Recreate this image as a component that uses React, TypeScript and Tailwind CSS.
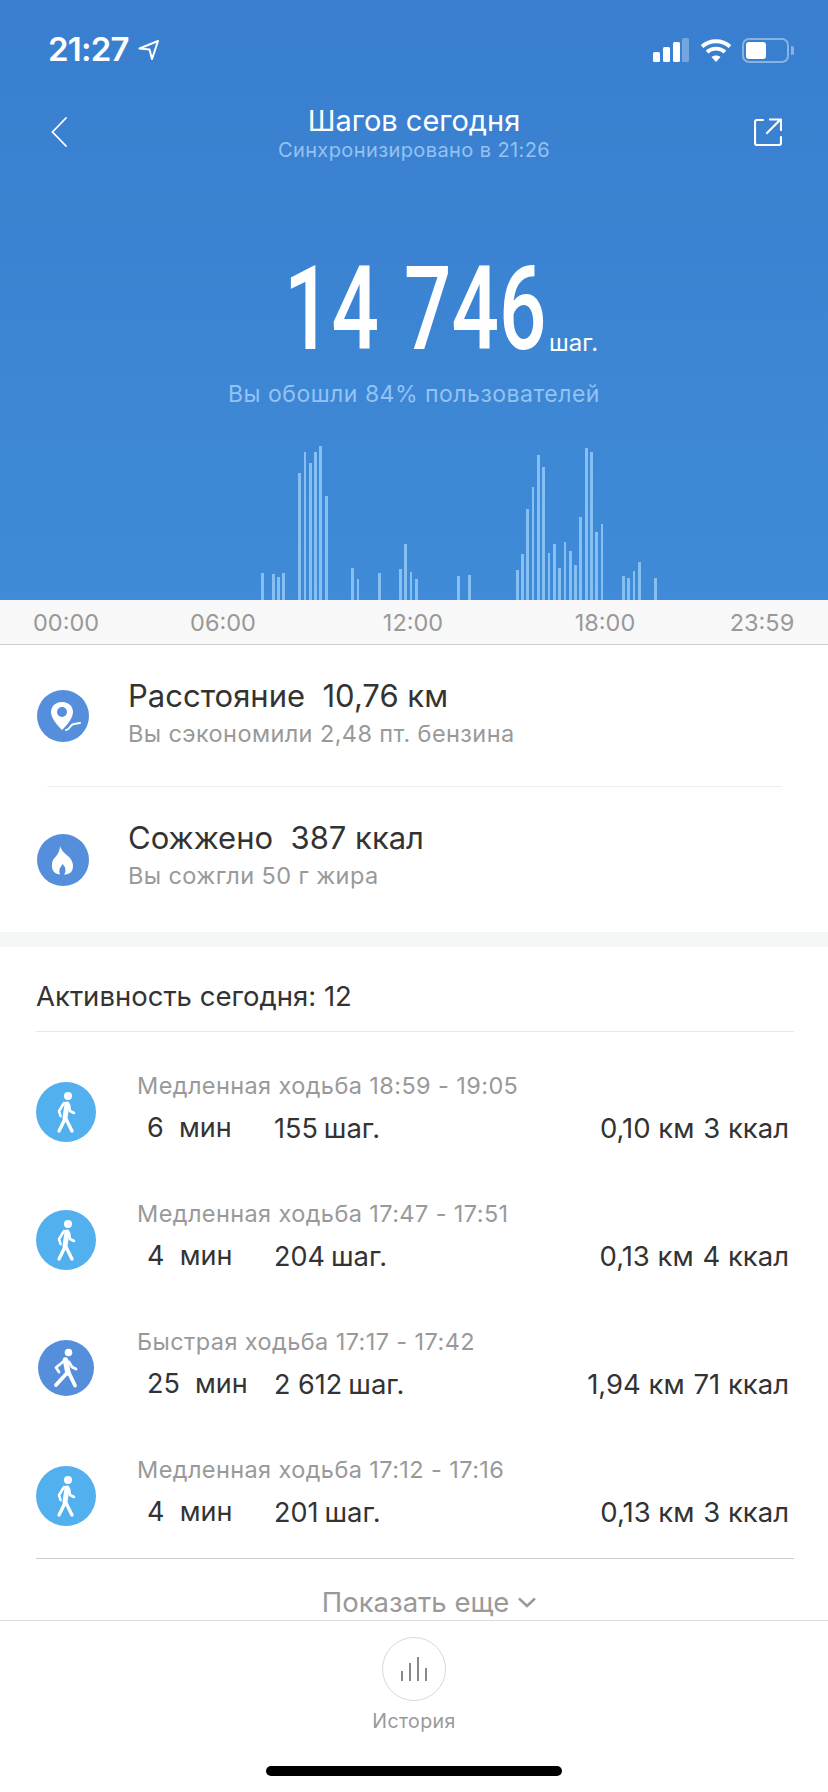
const bars = [
  [261, 3, 27], [272, 3, 26], [277, 3, 23], [282, 3, 27], [298, 3, 127], [304, 2, 148], [309, 3, 137], [314, 3, 148],
  [319, 3, 154], [325, 3, 104], [351, 3, 32], [357, 2, 21], [378, 3, 27], [399, 3, 31], [404, 3, 56], [410, 2, 28],
  [415, 3, 21], [457, 3, 24], [468, 3, 25], [516, 3, 30], [521, 3, 46], [526, 3, 91], [532, 2, 113], [537, 3, 145],
  [542, 3, 133], [548, 2, 47], [553, 3, 56], [558, 3, 32], [564, 2, 58], [569, 3, 49], [574, 3, 35], [579, 3, 83],
  [585, 3, 152], [590, 3, 148], [595, 3, 68], [601, 2, 76], [622, 3, 24], [627, 3, 22], [633, 2, 29], [638, 3, 38],
  [654, 3, 22],
];

const activities = [
  { title: "Медленная ходьба 18:59 - 19:05", min: "6", steps: "155", km: "0,10", kcal: "3", fast: false },
  { title: "Медленная ходьба 17:47 - 17:51", min: "4", steps: "204", km: "0,13", kcal: "4", fast: false },
  { title: "Быстрая ходьба 17:17 - 17:42", min: "25", steps: "2 612", km: "1,94", kcal: "71", fast: true },
  { title: "Медленная ходьба 17:12 - 17:16", min: "4", steps: "201", km: "0,13", kcal: "3", fast: false },
];

function StatusBar() {
  return (
    <div className="h-[90px] pt-[31px] pl-[48px] pr-[34px] flex justify-between items-start text-white">
      <div className="flex items-center h-[38px]">
        <span className="text-[33px] font-semibold tracking-[-0.8px]">21:27</span>
        <svg width="22" height="22" viewBox="0 0 22 22" className="ml-[9px]" fill="none" stroke="white" strokeWidth="2">
          <path d="M1.500 9.500 L20 2 L14 20 L11.500 10.500 Z" strokeLinejoin="round" />
        </svg>
      </div>
      <div className="flex items-center h-[38px]">
        <svg width="36" height="24" viewBox="0 0 36 24">
          <rect x="0" y="14" width="7" height="10" rx="1.500" fill="white" />
          <rect x="10" y="9" width="7" height="15" rx="1.500" fill="white" />
          <rect x="20" y="4" width="7" height="20" rx="1.500" fill="white" />
          <rect x="29" y="0" width="7" height="24" rx="1.500" fill="white" fillOpacity="0.3" />
        </svg>
        <svg width="32" height="24" viewBox="0 0 32 24" fill="none" stroke="white" strokeWidth="3.800" className="ml-[11px]">
          <path d="M2 8.500 C10 1.500 22 1.500 30 8.500" />
          <path d="M7 14 C12 9.500 20 9.500 25 14" />
          <path d="M16 24 L11.500 19 C14 17 18 17 20.500 19 Z" fill="white" stroke="none" />
        </svg>
        <div className="relative w-[47px] h-[25px] ml-[10px] rounded-[7px] border-2 border-white/40 p-[2px] mr-[5px]">
          <div className="w-[20px] h-full rounded-[3px] bg-white"></div>
          <div className="absolute right-[-7px] top-[6px] w-[3px] h-[9px] rounded-r-[2px] bg-white/40"></div>
        </div>
      </div>
    </div>
  );
}

function NavBar() {
  return (
    <div className="h-[72px] flex justify-between items-start pl-[51px] pr-[46px]">
      <svg width="16" height="30" viewBox="0 0 16 30" fill="none" stroke="white" strokeWidth="1.800" className="mt-[27px]" strokeLinecap="round">
        <path d="M15 1 L1.500 15 L15 29" />
      </svg>
      <div className="flex flex-col items-center pt-[14px] ml-[7px]">
        <span className="text-[29px] leading-[34px] text-white">Шагов сегодня</span>
        <span className="text-[20px] leading-[22px] mt-[1px] tracking-[0.4px] text-[#95c2f0]">Синхронизировано в 21:26</span>
      </div>
      <svg width="28" height="28" viewBox="0 0 28 28" fill="none" stroke="white" strokeWidth="2.200" className="mt-[28px]" strokeLinecap="round" strokeLinejoin="round">
        <path d="M9 2 H3 Q1 2 1 4 V25 Q1 27 3 27 H25 Q27 27 27 25 V19" />
        <path d="M13 15 L26 2 M16 1.500 H27 V12" />
      </svg>
    </div>
  );
}

function PinIcon() {
  return (
    <svg width="52" height="52" viewBox="0 0 52 52" className="shrink-0">
      <circle cx="26" cy="26" r="26" fill="#558edb" />
      <path d="M25 12 C17.500 12 14 17.500 14 22 C14 28 20 35 25 40 C30 35 36 28 36 22 C36 17.500 32.500 12 25 12 Z" fill="white" />
      <circle cx="25" cy="22" r="5" fill="#558edb" />
      <path d="M29 40 C33 40 33 34 37 34 L43 33" fill="none" stroke="white" strokeWidth="2" strokeLinecap="round" />
    </svg>
  );
}

function FlameIcon() {
  return (
    <svg width="52" height="52" viewBox="0 0 52 52" className="shrink-0">
      <circle cx="26" cy="26" r="26" fill="#558edb" />
      <path d="M23 12 C25 18 29 20 33 24 C37 29 37 36 33 39 C31 40.500 29 40.500 27 40.500 C30 37 28 32 25.500 30 C24 33 21 35 23 40.500 C19 40.500 14 37 15 30 C15.500 25 18 24 20 21 C22 18 23 15 23 12 Z" fill="white" />
    </svg>
  );
}

function WalkIcon({ fast }: { fast: boolean }) {
  if (fast) {
    return (
      <svg width="56" height="56" viewBox="0 0 56 56">
        <circle cx="28" cy="28" r="28" fill="#558edb" />
        <circle cx="30.500" cy="12.500" r="3.800" fill="white" />
        <path d="M27.500 20 L30 33" stroke="white" strokeWidth="5.500" strokeLinecap="round" />
        <path d="M29 33 L18 45 M31 33 L37 45.500" fill="none" stroke="white" strokeWidth="3.800" strokeLinecap="round" strokeLinejoin="round" />
        <path d="M26 21 L18 27.500 L21 32 M31 22 L34 27 L38 29" fill="none" stroke="white" strokeWidth="2.800" strokeLinecap="round" strokeLinejoin="round" />
      </svg>
    );
  }
  return (
    <svg width="60" height="60" viewBox="0 0 60 60">
      <circle cx="30" cy="30" r="30" fill="#53b0ee" />
      <circle cx="32" cy="14" r="4" fill="white" />
      <path d="M31 22 L29 36" stroke="white" strokeWidth="5" strokeLinecap="round" />
      <path d="M29 37 L23 49 M30 37 L36 49" fill="none" stroke="white" strokeWidth="3.400" strokeLinecap="round" />
      <path d="M28 21 L23 29 L24.500 34 M33 23 L34 29 L38 31" fill="none" stroke="white" strokeWidth="2.600" strokeLinecap="round" strokeLinejoin="round" />
    </svg>
  );
}

function SummaryRow({ icon, title, value, note, rowClass, textClass }: { icon: React.ReactNode; title: string; value: string; note: string; rowClass: string; textClass: string }) {
  return (
    <div className={"flex items-center pl-[37px] " + rowClass}>
      {icon}
      <div className={"ml-[39px] " + textClass}>
        <div className="text-[31px] leading-[38px] text-[#333] whitespace-pre">
          {title}  {value}
        </div>
        <div className="text-[23.500px] leading-[28px] mt-[5px] tracking-[0.4px] text-[#999]">{note}</div>
      </div>
    </div>
  );
}

function ActivityRow({ a }: { a: (typeof activities)[number] }) {
  return (
    <div className="h-[128px] flex items-center">
      <div className="w-[60px] flex justify-center shrink-0">
        <WalkIcon fast={a.fast} />
      </div>
      <div className="flex-1 ml-[41px] mr-[5px] -mt-[7px]">
        <div className="text-[23.500px] leading-[30px] tracking-[0.4px] text-[#999]">{a.title}</div>
        <div className="flex justify-between mt-[10px] text-[27px] leading-[34px] text-[#333]">
          <div className="flex pl-[10px]">
            <span className="w-[127px] whitespace-pre">{a.min}  мин</span>
            <span>
              {a.steps}
              <span className="ml-[6px] text-[27.500px]">шаг.</span>
            </span>
          </div>
          <span className="text-[27.500px]">
            {a.km} км <span className="ml-[1px]">{a.kcal} ккал</span>
          </span>
        </div>
      </div>
    </div>
  );
}

export default function App() {
  return (
    <div className="relative w-[828px] h-[1792px] overflow-hidden bg-white font-[Inter,sans-serif]">
      <div className="h-[600px] bg-linear-to-b from-[#397ecf] to-[#3f8bd7] flex flex-col">
        <StatusBar />
        <NavBar />
        <div className="h-[94px]"></div>
        <div className="flex items-end pl-[289px] h-[106px]">
          <div className="w-[253px] flex justify-center">
            <span className="shrink-0 scale-x-[0.72] text-[116px] leading-[106px] font-medium [word-spacing:6px] whitespace-nowrap text-white font-[Roboto,sans-serif]">
              14 746
            </span>
          </div>
          <span className="text-[24px] leading-[30px] mb-[4px] text-white ml-[7px]">шаг.</span>
        </div>
        <div className="text-center text-[23px] leading-[30px] mt-[17px] tracking-[0.5px] text-[#93c3f2]">Вы обошли 84% пользователей</div>
        <svg width="828" height="160" viewBox="0 0 828 160" className="mt-auto">
          {bars.map(([x, w, h], i) => (
            <rect key={i} x={x} y={160 - h} width={w} height={h} fill="#86bff2" />
          ))}
        </svg>
      </div>

      <div className="h-[45px] flex items-center pl-[33px] pt-[1px] bg-[#f8f8f8] border-b border-[#cccccc] text-[23.500px] text-[#999]">
        <span className="w-[66px] text-center">00:00</span>
        <span className="w-[66px] text-center ml-[91px]">06:00</span>
        <span className="w-[66px] text-center ml-[124px]">12:00</span>
        <span className="w-[66px] text-center ml-[126px]">18:00</span>
        <span className="w-[66px] text-center ml-[91px]">23:59</span>
      </div>

      <SummaryRow icon={<PinIcon />} title="Расстояние" value="10,76 км" note="Вы сэкономили 2,48 пт. бензина" rowClass="h-[141px]" textClass="-mt-[7px]" />
      <div className="h-px ml-[47px] mr-[46px] bg-[#eeeeee]"></div>
      <SummaryRow icon={<FlameIcon />} title="Сожжено" value="387 ккал" note="Вы сожгли 50 г жира" rowClass="h-[145px]" textClass="-mt-[10px]" />
      <div className="h-[15px] bg-[#f5f7f7]"></div>

      <div className="ml-[36px] mr-[34px] h-[85px] border-b border-[#e8e8e8] flex items-center pt-[16px] text-[27.500px] text-[#333]">Активность сегодня: 12</div>
      <div className="ml-[36px] mr-[34px] pt-[16px] h-[527px] border-b border-[#cccccc]">
        {activities.map((a, i) => (
          <ActivityRow key={i} a={a} />
        ))}
      </div>
      <div className="h-[62px] flex items-center justify-center border-b border-[#dddddd] text-[27.500px] text-[#999] pt-[26px] pl-[30px]">
        Показать еще
        <svg width="18" height="11" viewBox="0 0 18 11" fill="none" stroke="#999" strokeWidth="2.400" className="ml-[9px]">
          <path d="M1 1.500 L9 9 L17 1.500" />
        </svg>
      </div>

      <div className="flex flex-col items-center pt-[16px]">
        <div className="w-[64px] h-[64px] rounded-full border border-[#d8d8d8] flex items-center justify-center">
          <svg width="26" height="26" viewBox="0 0 26 26" stroke="#888" strokeWidth="2">
            <path d="M1 15 V25 M9 7 V25 M17 1 V25 M25 12 V25" />
          </svg>
        </div>
        <div className="text-[19.500px] leading-[24px] mt-[8px] tracking-[0.4px] text-[#999]">История</div>
      </div>
      <div className="absolute left-[266px] top-[1766px] w-[296px] h-[10px] rounded-full bg-black"></div>
    </div>
  );
}
